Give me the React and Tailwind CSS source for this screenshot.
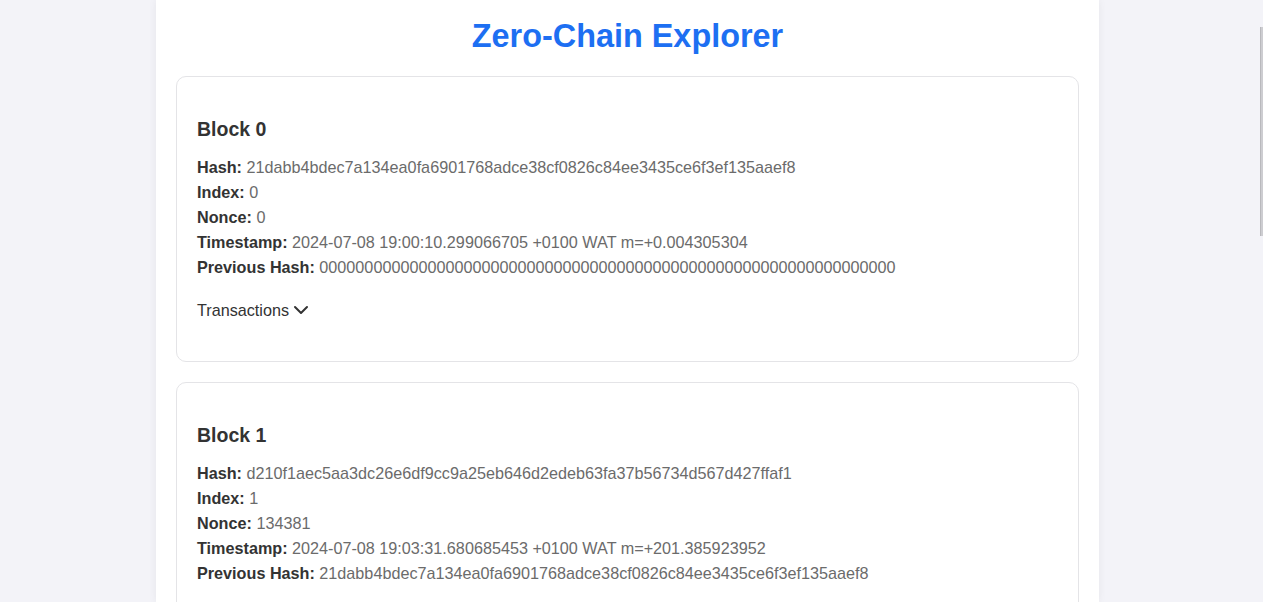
import { ChevronDown } from "lucide-react";

const blocks = [
  {
    index: 0,
    hash: "21dabb4bdec7a134ea0fa6901768adce38cf0826c84ee3435ce6f3ef135aaef8",
    nonce: 0,
    timestamp: "2024-07-08 19:00:10.299066705 +0100 WAT m=+0.004305304",
    prevHash: "0000000000000000000000000000000000000000000000000000000000000000",
  },
  {
    index: 1,
    hash: "d210f1aec5aa3dc26e6df9cc9a25eb646d2edeb63fa37b56734d567d427ffaf1",
    nonce: 134381,
    timestamp: "2024-07-08 19:03:31.680685453 +0100 WAT m=+201.385923952",
    prevHash: "21dabb4bdec7a134ea0fa6901768adce38cf0826c84ee3435ce6f3ef135aaef8",
  },
];

function Field({ label, value }) {
  return (
    <p className="leading-[25px]">
      <span className="font-bold text-[#333]">{label}:</span>{" "}
      <span className="text-[#6b6b6b]">{value}</span>
    </p>
  );
}

function BlockCard({ block }) {
  return (
    <div className="bg-white border border-[#e4e4e7] rounded-[10px] px-5 pt-5 pb-5">
      {/* Title */}
      <h3 className="mt-[21px] mb-[15px] text-[19.5px] leading-[22px] font-bold text-[#333]">
        Block {block.index}
      </h3>

      {/* Fields */}
      <div className="text-[16.2px]">
        <Field label="Hash" value={block.hash} />
        <Field label="Index" value={block.index} />
        <Field label="Nonce" value={block.nonce} />
        <Field label="Timestamp" value={block.timestamp} />
        <Field label="Previous Hash" value={block.prevHash} />
      </div>

      {/* Transactions toggle */}
      <button className="mt-[20px] mb-[21px] flex items-center text-[16.2px] leading-[20px] font-medium text-[#333]">
        Transactions
        <ChevronDown size={24} strokeWidth={2} className="text-[#333] -my-1" />
      </button>
    </div>
  );
}

export default function App() {
  return (
    <div
      className="h-screen overflow-hidden flex bg-[#f3f3f8]"
      style={{ fontFamily: '"Liberation Sans", Arial, sans-serif' }}
    >
      <div className="flex-1 flex justify-center">
        <div className="w-[943px] bg-white shadow-[0_0_8px_rgba(0,0,0,0.06)] px-5">
          <h1 className="pt-[18px] mb-[21px] text-center text-[32.4px] leading-[37px] font-bold text-[#1d6ff2]">
            Zero-Chain Explorer
          </h1>
          <div className="flex flex-col gap-5">
            {blocks.map((b) => (
              <BlockCard key={b.index} block={b} />
            ))}
          </div>
        </div>
      </div>

      {/* Scrollbar */}
      <div className="w-[8px] pt-[27px] flex justify-end">
        <div className="w-[3px] h-[209px] bg-[#cdcdd1] border-l border-[#b9b9bd]" />
      </div>
    </div>
  );
}
